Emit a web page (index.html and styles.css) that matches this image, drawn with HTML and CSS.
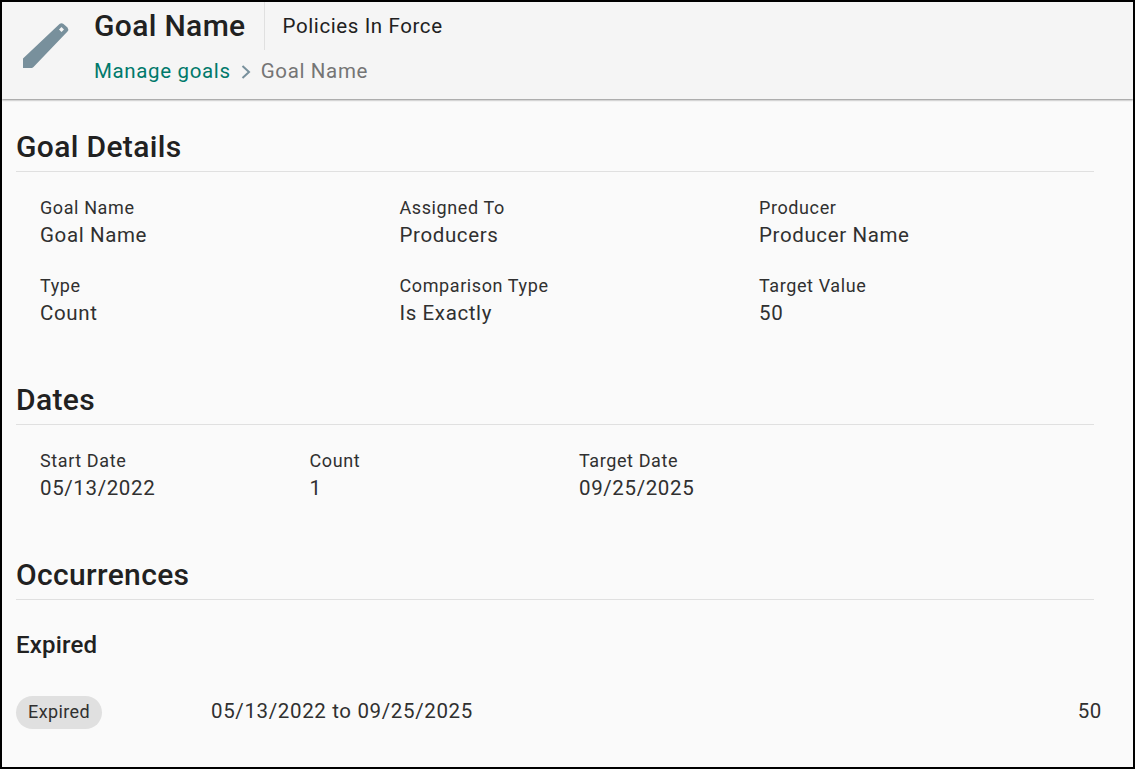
FILE: index.html
```html
<!DOCTYPE html>
<html lang="en">
<head>
<meta charset="utf-8">
<title>Goal Name</title>
<link rel="stylesheet" href="styles.css">
</head>
<body>
<div class="frame">
  <header class="topbar">
    <svg class="pencil" width="47" height="47" viewBox="0 0 47 47"><path fill-rule="evenodd" fill="#78909c" d="M1 46V36.500L37.500 2Q39.500 .5 41.500 2L45.500 5.500Q47 7.500 45.500 9.500L11.500 45Q10.500 46 9.500 46Z M39.500 5L37 7.500 39.500 10 42 7.500Z"/></svg>
    <div class="titles">
      <div class="title-row">
        <h1 class="title">Goal Name</h1>
        <div class="subtitle">Policies In Force</div>
      </div>
      <nav class="crumbs">
        <a class="crumb-link">Manage goals</a>
        <svg class="chev" width="10" height="14" viewBox="0 0 10 14"><path d="M1.500 1L8 7L1.500 13" fill="none" stroke="#78909c" stroke-width="2"/></svg>
        <span class="crumb-current">Goal Name</span>
      </nav>
    </div>
  </header>
  <main class="content">
    <section class="details">
      <h2 class="section-title">Goal Details</h2>
      <div class="grid grid-three">
        <div class="field"><div class="label">Goal Name</div><div class="value">Goal Name</div></div>
        <div class="field"><div class="label">Assigned To</div><div class="value">Producers</div></div>
        <div class="field"><div class="label">Producer</div><div class="value">Producer Name</div></div>
        <div class="field"><div class="label">Type</div><div class="value">Count</div></div>
        <div class="field"><div class="label">Comparison Type</div><div class="value">Is Exactly</div></div>
        <div class="field"><div class="label">Target Value</div><div class="value">50</div></div>
      </div>
    </section>
    <section class="dates">
      <h2 class="section-title">Dates</h2>
      <div class="grid grid-dates">
        <div class="field"><div class="label">Start Date</div><div class="value">05/13/2022</div></div>
        <div class="field"><div class="label">Count</div><div class="value">1</div></div>
        <div class="field"><div class="label">Target Date</div><div class="value">09/25/2025</div></div>
      </div>
    </section>
    <section class="occurrences">
      <h2 class="section-title">Occurrences</h2>
      <h3 class="group-title">Expired</h3>
      <div class="occ-row">
        <div class="occ-chip-cell"><span class="chip">Expired</span></div>
        <div class="occ-range">05/13/2022 to 09/25/2025</div>
        <div class="occ-value">50</div>
      </div>
    </section>
  </main>
</div>
</body>
</html>
```

FILE: styles.css
```css
* { box-sizing: border-box; }
html, body { margin: 0; padding: 0; height: 100%; }
body {
  font-family: Roboto, "Liberation Sans", sans-serif;
  color: #212121;
  background: #fafafa;
}
.frame {
  width: 1135px;
  height: 769px;
  border: 2px solid #000;
  background: #fafafa;
  overflow: hidden;
}
.topbar {
  display: flex;
  height: 97px;
  background: #f5f5f5;
  box-shadow: 0 1px 2px rgba(0,0,0,.45);
  position: relative;
}
.pencil { margin: 20px 0 0 20px; flex: none; }
.titles { margin-left: 25px; }
.title-row { display: flex; height: 48px; }
.title {
  margin: 0;
  font-size: 30px;
  font-weight: 500;
  line-height: 48px;
  letter-spacing: .35px;
  padding-right: 18px;
  border-right: 1px solid #e0e0e0;
}
.subtitle {
  font-size: 20.500px;
  line-height: 48px;
  padding-left: 18px;
  letter-spacing: .6px;
}
.crumbs { display: flex; align-items: center; margin-top: 9px; font-size: 20.500px; line-height: 24px; letter-spacing: .65px; }
.crumb-link { color: #00796b; }
.chev { margin: 2px 10px 0 10px; }
.crumb-current { color: #757575; }
.content { padding: 0 0 0 14px; }
.section-title {
  margin: 0;
  width: 1078px;
  font-size: 30px;
  font-weight: 500;
  line-height: 34px;
  padding-bottom: 7px;
  border-bottom: 1px solid #e0e0e0;
  letter-spacing: .35px;
}
.details { padding-top: 31px; }
.dates { padding-top: 58px; }
.occurrences { padding-top: 58px; }
.grid { display: grid; padding: 26px 0 0 24px; row-gap: 29px; }
.grid-three { grid-template-columns: 359.500px 359.500px 320px; }
.grid-dates { grid-template-columns: 269.500px 269.500px 320px; }
.label { font-size: 18px; line-height: 20px; letter-spacing: .6px; color: #303030; }
.value { font-size: 20.500px; line-height: 24px; margin-top: 5px; letter-spacing: .62px; color: #303030; }
.group-title { margin: 0; padding-top: 29px; font-size: 24px; font-weight: 500; line-height: 32px; letter-spacing: .2px; }
.occ-row { display: flex; align-items: center; width: 1086px; margin-top: 35px; }
.occ-chip-cell { width: 195px; }
.chip {
  display: inline-block;
  height: 33px;
  padding: 0 12px;
  border-radius: 17px;
  background: #e0e0e0;
  color: #303030;
  font-size: 18px;
  line-height: 32px;
  letter-spacing: .4px;
}
.occ-range { flex: 1; font-size: 20.500px; letter-spacing: .64px; padding-bottom: 3px; color: #303030; }
.occ-value { font-size: 20.500px; letter-spacing: .6px; padding-bottom: 3px; color: #303030; }
```
